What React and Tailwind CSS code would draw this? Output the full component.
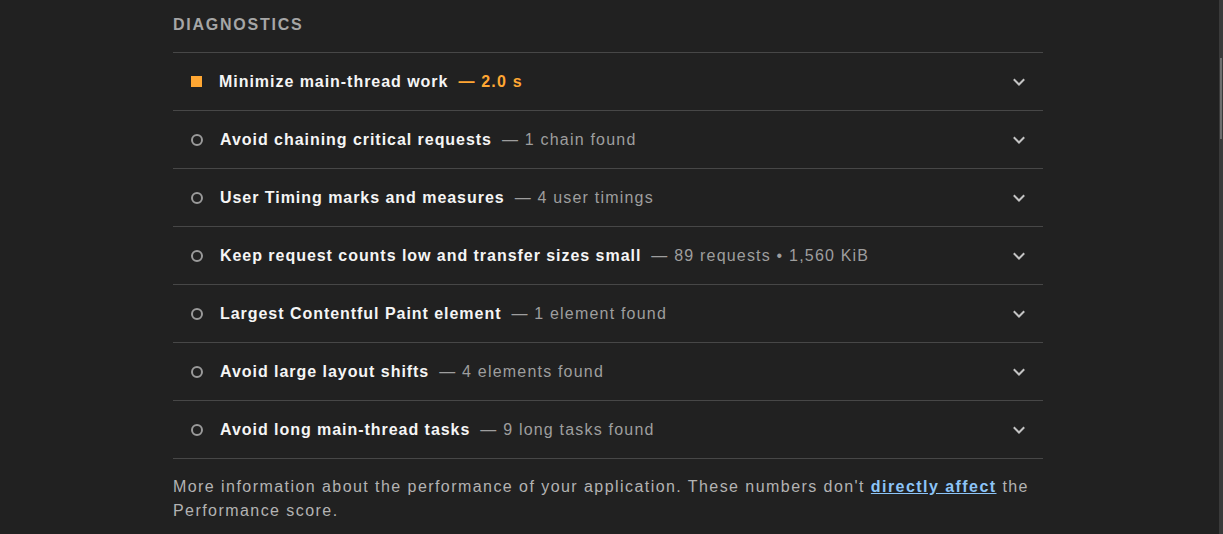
import React from "react";

const rows = [
  { title: "Minimize main-thread work", detail: "— 2.0 s", warn: true },
  { title: "Avoid chaining critical requests", detail: "— 1 chain found" },
  { title: "User Timing marks and measures", detail: "— 4 user timings" },
  { title: "Keep request counts low and transfer sizes small", detail: "— 89 requests • 1,560 KiB" },
  { title: "Largest Contentful Paint element", detail: "— 1 element found" },
  { title: "Avoid large layout shifts", detail: "— 4 elements found" },
  { title: "Avoid long main-thread tasks", detail: "— 9 long tasks found" },
];

function Chevron() {
  return (
    <svg width="14" height="14" viewBox="0 0 14 14" fill="none" className="shrink-0">
      <path d="M2.5 5 L7 9.5 L11.5 5" stroke="#c4c4c4" strokeWidth="2" strokeLinecap="square" />
    </svg>
  );
}

export default function App() {
  return (
    <div
      className="relative min-h-[534px] w-full bg-[#212121] overflow-hidden"
      style={{ fontFamily: '"Liberation Sans", Arial, sans-serif' }}
    >
      <div className="ml-[173px] w-[870px]">
        <div className="h-[52px] pt-[15px] text-[16px] leading-[20px] font-semibold uppercase tracking-[0.11em] text-[#a6a6a6]">
          Diagnostics
        </div>
        {rows.map((r, i) => (
          <div
            key={i}
            className="flex h-[58px] items-center border-t border-[#474747] pl-[18px] pr-[17px]"
          >
            {r.warn ? (
              <span className="block h-[11px] w-[11px] shrink-0 bg-[#ffa733]" />
            ) : (
              <span className="block h-[12px] w-[12px] shrink-0 rounded-full border-2 border-[#9a9a9a]" />
            )}
            <div className="ml-[17px] flex flex-1 items-baseline text-[16px] leading-[20px]">
              <span className="font-bold tracking-[0.06em] text-[#f5f5f5]">{r.title}</span>
              <span
                className={`ml-[10px] tracking-[0.075em] ${
                  r.warn ? "font-bold text-[#ffa733]" : "text-[#9e9e9e]"
                }`}
              >
                {r.detail}
              </span>
            </div>
            <Chevron />
          </div>
        ))}
        <div className="border-t border-[#474747] pt-[16px] text-[16px] leading-[24px] tracking-[0.09em] text-[#b3b3b3]">
          More information about the performance of your application. These numbers don't{" "}
          <a className="font-bold text-[#8cc4f8] underline" href="#">
            directly affect
          </a>{" "}
          the Performance score.
        </div>
      </div>
      <div className="absolute right-0 top-0 h-full w-[4px] bg-[#3a3a3a]">
        <div className="mt-[58px] ml-[1px] h-[81px] w-[2px] bg-[#6e6e6e]" />
      </div>
    </div>
  );
}
